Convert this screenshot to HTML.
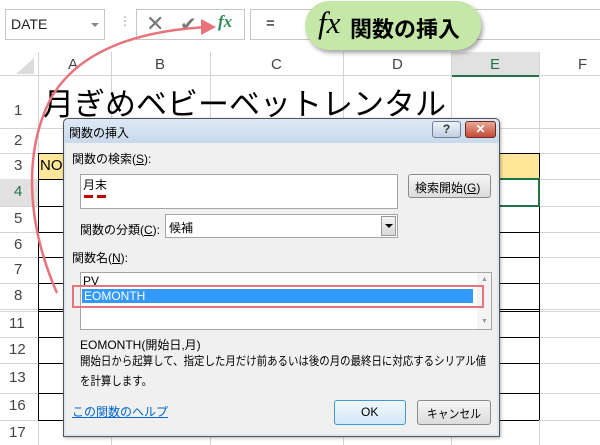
<!DOCTYPE html>
<html><head><meta charset="utf-8"><style>
*{margin:0;padding:0;box-sizing:border-box}
body{width:600px;height:445px;overflow:hidden;background:#fff;position:relative;font-family:"Liberation Sans","Noto Sans CJK JP",sans-serif;color:#000}
.a{position:absolute}
.t{font-size:12px;white-space:nowrap}
</style></head><body>
<div class="a" style="left:0;top:0;width:600px;height:52px;background:#fff"></div>
<div class="a" style="left:5px;top:9px;width:100px;height:31px;border:1px solid #c6c6c6"></div>
<div class="a t" style="left:11px;top:16px;font-size:14px;color:#222">DATE</div>
<div class="a" style="left:91px;top:23px;border-left:4px solid transparent;border-right:4px solid transparent;border-top:4px solid #888"></div>
<div class="a t" style="left:119px;top:14px;color:#999;font-size:12px">⋮</div>
<div class="a" style="left:136px;top:9px;width:109px;height:31px;border:1px solid #c6c6c6"></div>
<div class="a t" style="left:146px;top:11px;font-size:22px;color:#777">✕</div>
<div class="a t" style="left:180px;top:12px;font-size:20px;color:#777">✔</div>
<div class="a t" style="left:218px;top:12px;font-size:17px;color:#2e8b57;font-family:'Liberation Serif',serif;font-style:italic;font-weight:bold">fx</div>
<div class="a" style="left:250px;top:9px;width:350px;height:31px;border:1px solid #c6c6c6;border-right:none"></div>
<div class="a t" style="left:266px;top:15px;font-size:15px">=</div>
<div class="a" style="left:0;top:52px;width:600px;height:24px;background:#fff;border-bottom:1px solid #d4d4d4"></div>
<div class="a" style="left:16px;top:58px;border-left:18px solid transparent;border-bottom:16px solid #dcdcdc"></div>
<div class="a" style="left:451px;top:52px;width:88px;height:25px;background:#e1e1e1;border-bottom:2px solid #217346"></div>
<div class="a t" style="left:68px;top:56px;font-size:15px;color:#444">A</div>
<div class="a t" style="left:155px;top:56px;font-size:15px;color:#444">B</div>
<div class="a t" style="left:271px;top:56px;font-size:15px;color:#444">C</div>
<div class="a t" style="left:392px;top:56px;font-size:15px;color:#444">D</div>
<div class="a t" style="left:490px;top:56px;font-size:15px;color:#217346">E</div>
<div class="a t" style="left:578px;top:56px;font-size:15px;color:#444">F</div>
<svg class="a" style="left:0;top:52px" width="600" height="393">
<g stroke="#d4d4d4" stroke-width="1">
<line x1="38.5" y1="0" x2="38.5" y2="393"/><line x1="111.5" y1="0" x2="111.5" y2="393"/><line x1="210.5" y1="0" x2="210.5" y2="393"/><line x1="343.5" y1="0" x2="343.5" y2="393"/><line x1="451.5" y1="0" x2="451.5" y2="393"/><line x1="539.5" y1="0" x2="539.5" y2="393"/>
<line x1="0" y1="76.5" x2="600" y2="76.5"/><line x1="0" y1="101.5" x2="600" y2="101.5"/><line x1="0" y1="127.5" x2="600" y2="127.5"/><line x1="0" y1="154.5" x2="600" y2="154.5"/><line x1="0" y1="180.5" x2="600" y2="180.5"/><line x1="0" y1="205.5" x2="600" y2="205.5"/><line x1="0" y1="231.5" x2="600" y2="231.5"/><line x1="0" y1="257.5" x2="600" y2="257.5"/><line x1="0" y1="259.5" x2="600" y2="259.5"/><line x1="0" y1="285.5" x2="600" y2="285.5"/><line x1="0" y1="311.5" x2="600" y2="311.5"/><line x1="0" y1="341.5" x2="600" y2="341.5"/><line x1="0" y1="368.5" x2="600" y2="368.5"/>
</g></svg>
<div class="a" style="left:0;top:179px;width:38px;height:27px;background:#e1e1e1"></div>
<div class="a" style="left:38px;top:153px;width:501px;height:26px;background:#ffe699"></div>
<svg class="a" style="left:0;top:0" width="600" height="445">
<g stroke="#000" stroke-width="1">
<line x1="38" y1="153.5" x2="539" y2="153.5"/><line x1="38" y1="179.5" x2="539" y2="179.5"/><line x1="38" y1="206.5" x2="539" y2="206.5"/><line x1="38" y1="232.5" x2="539" y2="232.5"/><line x1="38" y1="257.5" x2="539" y2="257.5"/><line x1="38" y1="283.5" x2="539" y2="283.5"/><line x1="38" y1="309.5" x2="539" y2="309.5"/><line x1="38" y1="311.5" x2="539" y2="311.5"/><line x1="38" y1="337.5" x2="539" y2="337.5"/><line x1="38" y1="363.5" x2="539" y2="363.5"/><line x1="38" y1="393.5" x2="539" y2="393.5"/><line x1="38" y1="420.5" x2="539" y2="420.5"/>
<line x1="539.5" y1="153" x2="539.5" y2="420"/><line x1="38.5" y1="153" x2="38.5" y2="420"/>
</g>
<rect x="451" y="179" width="88" height="27" fill="none" stroke="#217346" stroke-width="2"/>
</svg>
<div class="a" style="left:0;top:0;font-size:15px;color:#444">
<span class="a" style="left:14px;top:102px">1</span><span class="a" style="left:14px;top:132px">2</span><span class="a" style="left:14px;top:157px">3</span><span class="a" style="left:14px;top:183px;color:#217346">4</span><span class="a" style="left:14px;top:210px">5</span><span class="a" style="left:14px;top:236px">6</span><span class="a" style="left:14px;top:261px">7</span><span class="a" style="left:14px;top:287px">8</span><span class="a" style="left:9px;top:315px">11</span><span class="a" style="left:9px;top:341px">12</span><span class="a" style="left:9px;top:369px">13</span><span class="a" style="left:9px;top:397px">16</span><span class="a" style="left:9px;top:424px">17</span></div>
<div class="a t" style="left:43px;top:79px;font-size:31px">月ぎめベビーベットレンタル</div>
<div class="a t" style="left:40px;top:157px;font-size:15px">NO</div>
<div class="a" style="left:305px;top:1px;width:176px;height:49px;border-radius:25px;background:#c5e8a8;box-shadow:2px 3px 4px rgba(0,0,0,.35)"></div>
<div class="a t" style="left:318px;top:5px;font-size:31px;font-family:'Liberation Serif',serif;font-style:italic">fx</div>
<div class="a t" style="left:350px;top:12px;font-size:22px;font-weight:bold">関数の挿入</div>
<div class="a" style="left:63px;top:118px;width:437px;height:319px;background:#dbe7f3;border:1px solid #555;border-radius:5px 5px 0 0;box-shadow:1px 1px 3px rgba(0,0,0,.3)"></div>
<div class="a" style="left:64px;top:119px;width:435px;height:24px;background:linear-gradient(#dfe9f5,#c8d9ec);border-radius:5px 5px 0 0"></div>
<div class="a t" style="left:69px;top:124px">関数の挿入</div>
<div class="a" style="left:432px;top:121px;width:29px;height:17px;border:1px solid #6f7f95;border-radius:3px;background:linear-gradient(#eef3f9,#c0cfe2);text-align:center;font-size:12px;font-weight:bold;color:#333;line-height:15px">?</div>
<div class="a" style="left:465px;top:121px;width:31px;height:17px;border:1px solid #6e2a20;border-radius:3px;background:linear-gradient(#e9a897,#c24a35);text-align:center;font-size:12px;font-weight:bold;color:#fff;line-height:15px">✕</div>
<div class="a" style="left:66px;top:143px;width:431px;height:291px;background:#f0f0f0"></div>
<div class="a t" style="left:72px;top:150px">関数の検索(<u>S</u>):</div>
<div class="a" style="left:80px;top:174px;width:318px;height:35px;background:#fff;border:1px solid #a5a5a5"></div>
<div class="a t" style="left:83px;top:176px">月末</div>
<div class="a" style="left:84px;top:195px;width:9px;height:3px;background:#c00000"></div>
<div class="a" style="left:97px;top:195px;width:9px;height:3px;background:#c00000"></div>
<div class="a" style="left:408px;top:174px;width:83px;height:24px;border:1px solid #8a8a8a;border-radius:3px;background:linear-gradient(#f6f6f6,#dcdcdc)"></div>
<div class="a t" style="left:415px;top:179px">検索開始(<u>G</u>)</div>
<div class="a t" style="left:80px;top:221px">関数の分類(<u>C</u>):</div>
<div class="a" style="left:165px;top:214px;width:233px;height:24px;background:#fff;border:1px solid #a5a5a5"></div>
<div class="a t" style="left:169px;top:219px">候補</div>
<div class="a" style="left:381px;top:216px;width:15px;height:20px;border:1px solid #999;background:linear-gradient(#f4f4f4,#d8d8d8)"></div>
<div class="a" style="left:385px;top:224px;border-left:4px solid transparent;border-right:4px solid transparent;border-top:4px solid #000"></div>
<div class="a t" style="left:72px;top:249px">関数名(<u>N</u>):</div>
<div class="a" style="left:80px;top:272px;width:412px;height:58px;background:#fff;border:1px solid #a5a5a5"></div>
<div class="a" style="left:477px;top:273px;width:14px;height:56px;background:#f4f4f4"></div>
<div class="a t" style="left:481px;top:276px;font-size:7px;color:#999">▲</div>
<div class="a t" style="left:481px;top:318px;font-size:7px;color:#999">▼</div>
<div class="a t" style="left:83px;top:274px">PV</div>
<div class="a" style="left:82px;top:289px;width:391px;height:14px;background:#3399ff"></div>
<div class="a t" style="left:84px;top:289px;color:#fff">EOMONTH</div>
<div class="a" style="left:72px;top:285px;width:412px;height:23px;border:2px solid #e8737a"></div>
<div class="a t" style="left:80px;top:336px">EOMONTH(開始日,月)</div>
<div class="a t" style="left:80px;top:352px;transform:scaleX(0.87);transform-origin:0 0">開始日から起算して、指定した月だけ前あるいは後の月の最終日に対応するシリアル値</div>
<div class="a t" style="left:80px;top:372px;transform:scaleX(0.87);transform-origin:0 0">を計算します。</div>
<div class="a t" style="left:72px;top:403px;color:#0066cc;text-decoration:underline">この関数のヘルプ</div>
<div class="a" style="left:334px;top:400px;width:72px;height:25px;border:1px solid #3c9ad6;border-radius:3px;background:linear-gradient(#f2f8fd,#d4e8f7)"></div>
<div class="a t" style="left:361px;top:405px">OK</div>
<div class="a" style="left:417px;top:400px;width:74px;height:25px;border:1px solid #8a8a8a;border-radius:3px;background:linear-gradient(#f6f6f6,#dcdcdc)"></div>
<div class="a t" style="left:427px;top:405px;transform:scaleX(0.9);transform-origin:0 0">キャンセル</div>
<svg class="a" style="left:0;top:0" width="600" height="445">
<path d="M57 293 C 25 220, 25 150, 50 100 C 80 45, 150 30, 208 27" fill="none" stroke="#e8737a" stroke-width="2.5"/>
<path d="M201 19 L216 27 L201 35 Z" fill="#e8737a"/>
</svg>
</body></html>
